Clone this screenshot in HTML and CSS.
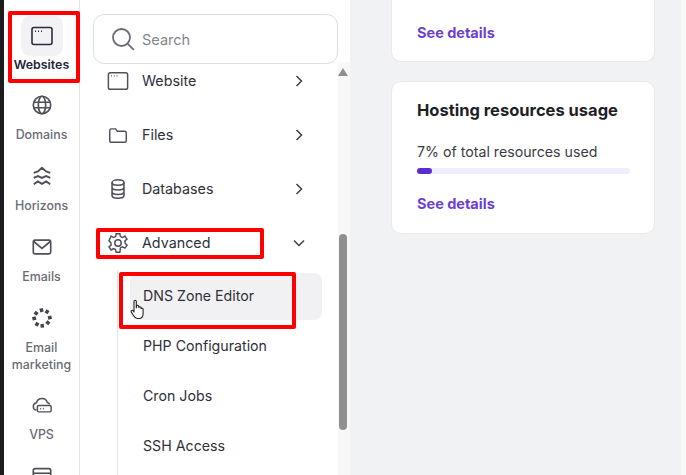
FILE: index.html
```html
<!DOCTYPE html>
<html lang="en">
<head>
<meta charset="utf-8">
<title>Websites</title>
<link rel="stylesheet" href="styles.css">
</head>
<body>
<div class="app">
  <div class="edge"></div>
  <nav class="rail">
    <a class="rail-item active">
      <span class="tile">
        <svg class="ic" viewBox="0 0 24 24" fill="none" stroke="#2a2c3a" stroke-width="1.6"><rect x="2" y="3.5" width="20" height="17" rx="2"/><path d="M5 7.2h1M8 7.2h1M11 7.2h1" stroke-width="1.5"/></svg>
      </span>
      <span class="rail-label">Websites</span>
    </a>
    <a class="rail-item">
      <svg class="ic" viewBox="0 0 24 24" fill="none" stroke="#4f5058" stroke-width="1.8"><circle cx="12" cy="12" r="9.500"/><ellipse cx="12" cy="12" rx="4" ry="9.500"/><path d="M3 9h18M3 15h18"/></svg>
      <span class="rail-label">Domains</span>
    </a>
    <a class="rail-item">
      <svg class="ic" viewBox="0 0 24 24" fill="none" stroke="#4f5058" stroke-width="2.100"><path d="M3 8.500 7.500 7 12 3l4.500 4L21 8.500M3 14l4.500-2 4.500 2 4.500-2L21 14M3 21l4.500-3 4.500 2.500 4.500-2.500 4.500 3"/></svg>
      <span class="rail-label">Horizons</span>
    </a>
    <a class="rail-item">
      <svg class="ic" viewBox="0 0 24 24" fill="none" stroke="#4f5058" stroke-width="1.800"><rect x="2.500" y="4.500" width="19" height="15" rx="1.800"/><path d="m3 6 9 7.500L21 6"/></svg>
      <span class="rail-label">Emails</span>
    </a>
    <a class="rail-item two-line">
      <svg class="ic" viewBox="0 0 24 24" fill="none" stroke="#44454e" stroke-width="3.800"><path d="M11 1.500 12 5.500M18.500 3.500 16.500 7M22.500 11 18.500 12M20 18.500 16.800 16M12.500 22.500 12 18.500M5.500 20.500 7.500 17M1.500 13 5.500 12M4 5.500 7.200 8"/></svg>
      <span class="rail-label">Email marketing</span>
    </a>
    <a class="rail-item">
      <svg class="ic" viewBox="0 0 24 24" fill="none" stroke="#4f5058" stroke-width="1.600"><path d="M6 17.500c-2-.3-3.500-2-3.500-4 0-2 1.500-3.700 3.500-4 .7-2.500 3-4.500 6-4.500s5 1.700 5.800 4.300c1.200.2 2.200 1 2.700 2"/><rect x="7" y="12.500" width="15" height="7" rx="1.500"/><path d="M10 16h1M13 16h1"/></svg>
      <span class="rail-label">VPS</span>
    </a>
    <a class="rail-item">
      <svg class="ic" viewBox="0 0 24 24" fill="none" stroke="#4f5058" stroke-width="1.800"><rect x="2.500" y="4" width="19" height="16" rx="2"/><path d="M2.500 9h19"/></svg>
    </a>
  </nav>

  <aside class="panel">
    <div class="search">
      <svg class="search-ic" viewBox="0 0 24 24" fill="none" stroke="#6b6c73" stroke-width="1.800"><circle cx="10.500" cy="10.500" r="8.500"/><path d="m16.800 16.800 6 6"/></svg>
      <span class="search-text">Search</span>
    </div>
    <ul class="menu">
      <li class="menu-item">
        <svg class="ic" viewBox="0 0 24 24" fill="none" stroke="#4f5058" stroke-width="1.600"><rect x="1.500" y="3" width="21" height="18" rx="2"/><path d="M4.500 6.500h1M7.500 6.500h1M10.500 6.500h1" stroke-width="1.300"/></svg>
        <span class="menu-label">Website</span>
        <svg class="chev" viewBox="0 0 12 12" fill="none" stroke="#3c3d46" stroke-width="1.500"><path d="m3.500 1 5 5-5 5"/></svg>
      </li>
      <li class="menu-item">
        <svg class="ic" viewBox="0 0 24 24" fill="none" stroke="#4f5058" stroke-width="1.600"><path d="M3 7c0-1 .7-1.700 1.700-1.700h4.600l2 2.700h8c1 0 1.700.7 1.700 1.700v8.600c0 1-.7 1.700-1.700 1.700H4.700c-1 0-1.700-.7-1.700-1.700z"/></svg>
        <span class="menu-label">Files</span>
        <svg class="chev" viewBox="0 0 12 12" fill="none" stroke="#3c3d46" stroke-width="1.500"><path d="m3.500 1 5 5-5 5"/></svg>
      </li>
      <li class="menu-item">
        <svg class="ic" viewBox="0 0 24 24" fill="none" stroke="#4f5058" stroke-width="1.700"><ellipse cx="12" cy="5" rx="6.500" ry="3"/><path d="M5.500 5v14c0 1.700 3 3 6.500 3s6.500-1.300 6.500-3V5M5.500 10c0 1.700 3 3 6.500 3s6.500-1.300 6.500-3M5.500 15c0 1.700 3 3 6.500 3s6.500-1.300 6.500-3"/></svg>
        <span class="menu-label">Databases</span>
        <svg class="chev" viewBox="0 0 12 12" fill="none" stroke="#3c3d46" stroke-width="1.500"><path d="m3.500 1 5 5-5 5"/></svg>
      </li>
      <li class="menu-item">
        <svg class="ic" viewBox="0 0 24 24" fill="none" stroke="#4f5058" stroke-width="1.600"><circle cx="12" cy="12" r="3.500"/><path d="M10 2h4l.6 3 2.300 1 2.600-1.600 2.300 3.300-2.200 2 .1 2.600 2.200 2-2.300 3.300-2.700-1.500-2.200 1L14 22h-4l-.7-2.900-2.200-1-2.700 1.500-2.200-3.300 2.200-2-.1-2.600-2.200-2L4.500 4.400 7.100 6l2.300-1z"/></svg>
        <span class="menu-label">Advanced</span>
        <svg class="chev" viewBox="0 0 12 12" fill="none" stroke="#3c3d46" stroke-width="1.500"><path d="m1 3.500 5 5 5-5"/></svg>
      </li>
    </ul>
    <ul class="sub">
      <li class="sub-item hover">DNS Zone Editor</li>
      <li class="sub-item">PHP Configuration</li>
      <li class="sub-item">Cron Jobs</li>
      <li class="sub-item">SSH Access</li>
    </ul>
    <div class="scrollbar">
      <span class="scroll-up"></span>
      <span class="scroll-thumb"></span>
    </div>
  </aside>

  <main class="main">
    <section class="card card-cut">
      <a class="link">See details</a>
    </section>
    <section class="card">
      <h2 class="card-title">Hosting resources usage</h2>
      <p class="card-text">7% of total resources used</p>
      <div class="bar"><span class="bar-fill"></span></div>
      <a class="link">See details</a>
    </section>
  </main>
  <div class="edge-right"></div>
</div>

<span class="mark mark-websites"></span>
<span class="mark mark-advanced"></span>
<span class="mark mark-dns"></span>
<svg class="cursor" viewBox="0 0 16 22" fill="#fff" stroke="#222" stroke-width="1.100" stroke-linejoin="round"><path d="M4 2.500c0-1.600 2.300-1.600 2.300 0V9l.2-1.800c.3-1.300 2.200-1.200 2.300.2l.1 1.200c.2-1.200 2.100-1.100 2.200.2v1c.3-1 2-.8 2 .5v4.200c0 2.500-1.300 5-4.200 5H7.300c-2 0-2.800-1.200-3.800-3L1.300 13c-.7-1.400 1-2.300 1.900-1.200L4 13z"/></svg>
</body>
</html>
```
FILE: styles.css
```css
* { box-sizing: border-box; }
html, body { margin: 0; height: 475px; overflow: hidden; }
body { font-family: "Inter", "Liberation Sans", sans-serif; color: #2a2c36; background: #f1f2f4; position: relative; }
ul { list-style: none; margin: 0; padding: 0; }
.app { display: flex; height: 475px; }
.edge { width: 4px; background: #1c1c1c; flex: none; }
.edge-right { width: 5px; flex: none; background: #f8f8f9; }
.ic { width: 22px; height: 22px; display: block; flex: none; }

.rail { width: 76px; flex: none; background: #fff; border-right: 1px solid #e3e3e6; display: flex; flex-direction: column; align-items: center; padding-top: 16px; overflow: hidden; }
.rail-item { display: flex; flex-direction: column; align-items: center; flex: none; padding: 18px 0 4px; }
.rail-item .ic { margin-bottom: 10px; }
.rail-item.two-line { margin-bottom: -1px; }
.rail-item.active { height: 60px; padding: 0; }
.rail-item.active .ic { width: 24px; height: 24px; margin: 0; }
.tile { width: 42px; height: 40px; background: #f2f2f4; border-radius: 9px; display: flex; align-items: center; justify-content: center; margin-bottom: 1px; }
.rail-label { font-size: 12.400px; line-height: 17px; font-weight: 500; color: #6a6b74; text-align: center; width: 70px; }
.active .rail-label { color: #23253a; font-weight: 600; line-height: 15px; }

.panel { width: 270px; flex: none; background: #fff; position: relative; overflow: hidden; padding: 14px 0 0 13px; }
.search { width: 245px; height: 50px; border: 1px solid #dfdfe3; border-radius: 11px; display: flex; align-items: center; padding-left: 17px; gap: 7px; }
.search-ic { width: 24px; height: 24px; }
.search-text { font-size: 14.500px; color: #85868d; }
.menu { margin-top: -10px; width: 212px; padding-left: 14px; }
.menu-item { height: 54px; display: flex; align-items: center; gap: 13px; }
.menu-label { font-size: 14.300px; font-weight: 400; color: #2f3039; flex: 1; padding-bottom: 1px; }
.chev { width: 12px; height: 12px; flex: none; }
.sub { margin-left: 24px; border-left: 1px solid #e4e4e7; padding: 3px 0 0 12px; width: 217px; height: 230px; }
.sub-item { height: 50px; font-size: 14.200px; font-weight: 400; color: #2f3039; display: flex; align-items: center; padding-left: 13px; margin-right: 12px; }
.sub-item.hover { height: 47px; background: #f1f1f3; border-radius: 8px; padding-bottom: 2px; }
.scrollbar { position: absolute; top: 62px; right: 0; width: 12px; height: 413px; background: #f7f7f8; }
.scroll-up { position: absolute; left: 0; top: 6px; border: 5px solid transparent; border-top: 0; border-bottom: 8px solid #8f8f8f; }
.scroll-thumb { position: absolute; left: 1px; top: 172px; width: 8px; height: 196px; background: #8f8f8f; border-radius: 4px; }

.main { flex: 1; padding-left: 41px; display: flex; flex-direction: column; gap: 19px; min-width: 0; }
.card { width: 264px; background: #fff; border: 1px solid #e9e9ec; border-radius: 10px; padding: 18px 24px 0 25px; height: 153px; }
.card-cut { height: 62px; border-top: 0; border-radius: 0 0 10px 10px; padding-top: 23px; }
.link { font-size: 14.500px; line-height: 20px; font-weight: 700; color: #6b3fcf; display: block; }
.card-title { margin: 0; font-size: 16.500px; line-height: 20px; font-weight: 700; color: #1e1f26; }
.card-text { margin: 22px 0 0; font-size: 14.200px; line-height: 20px; font-weight: 400; color: #3a3b44; }
.bar { height: 6px; width: 213px; background: #f1edfc; border-radius: 3px; margin: 6px 0 20px; }
.bar-fill { display: block; width: 15px; height: 6px; background: #5a2dd0; border-radius: 3px; }

.mark { position: absolute; border: 4px solid #f00; border-radius: 2px; pointer-events: none; }
.mark-websites { left: 8px; top: 11px; width: 72px; height: 72px; }
.mark-advanced { left: 96px; top: 228px; width: 168px; height: 31px; }
.mark-dns { left: 119px; top: 272px; width: 177px; height: 57px; }
.cursor { position: absolute; left: 130px; top: 299px; width: 16px; height: 22px; }
```
